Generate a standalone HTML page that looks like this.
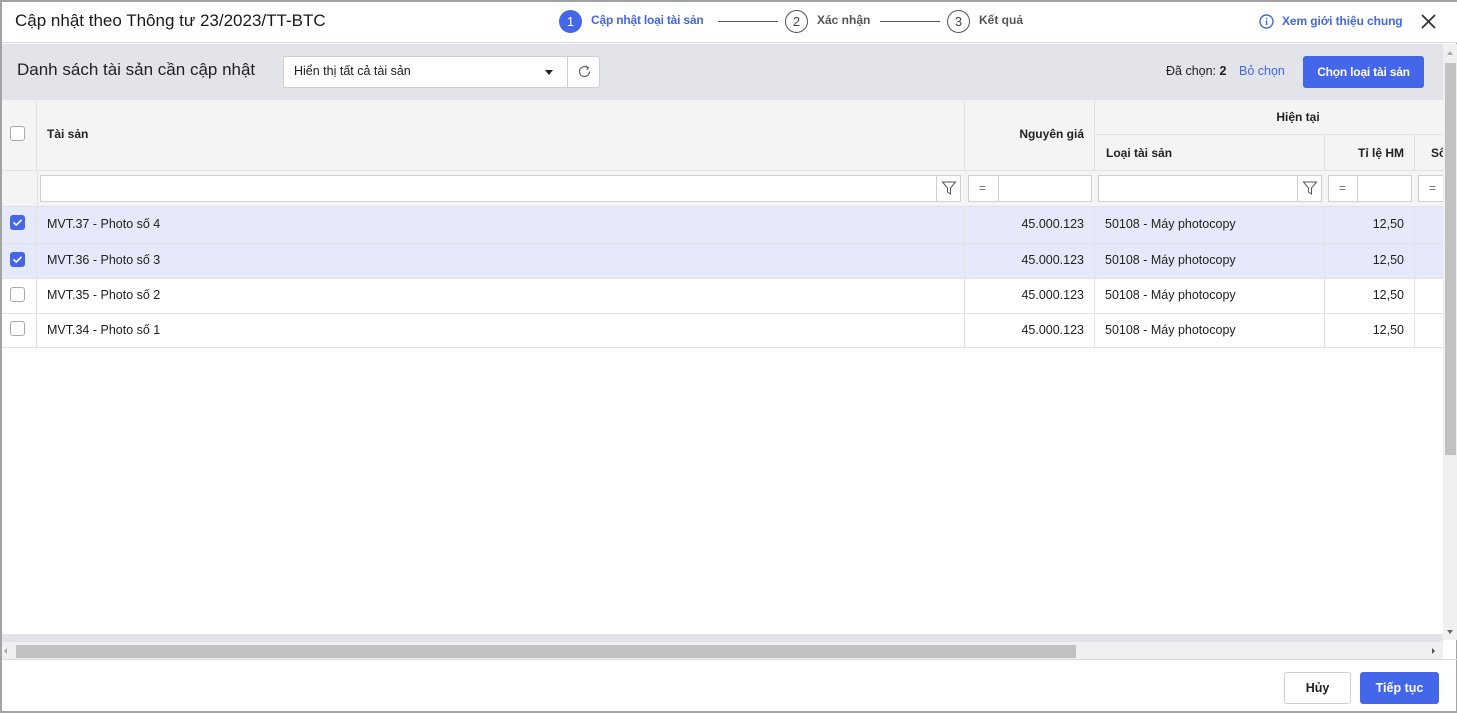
<!DOCTYPE html>
<html><head><meta charset="utf-8"><style>
*{box-sizing:border-box;margin:0;padding:0}
body{width:1457px;height:713px;overflow:hidden;font-family:"Liberation Sans",Arial,sans-serif;font-size:12.5px;color:#212121;background:#fff}
.frame{position:absolute;left:0;top:0;width:1457px;height:713px;border:2px solid #a3a3a3;border-right-width:1px;background:#fff}
.a{position:absolute}
.hdr{left:0;top:0;width:1455px;height:41px;border-bottom:1px solid #dcdcdc;background:#fff}
.tb{left:0;top:42px;width:1441px;height:56px;background:#e3e4e9}
.th{background:#f4f4f4;border-right:1px solid #e2e2e2;border-bottom:1px solid #e2e2e2;font-weight:bold;font-size:12px;color:#222}
.cb{width:15px;height:15px;border:1px solid #a9a9a9;border-radius:3px;background:#fff}
.inp{background:#fff;border:1px solid #cfcfcf;height:27px}
</style></head><body>
<div class="frame">
<div class="a hdr">
 <div class="a" style="left:13px;top:9px;font-size:17px;color:#1a1a1a">Cập nhật theo Thông tư 23/2023/TT-BTC</div>
 <div class="a" style="left:557px;top:8px;width:23px;height:23px;border-radius:50%;background:#4466e8;color:#fff;font-size:13px;text-align:center;line-height:23px">1</div>
 <div class="a" style="left:589px;top:11px;color:#4466e8;font-size:12px;font-weight:bold;letter-spacing:-0.2px">Cập nhật loại tài sản</div>
 <div class="a" style="left:716px;top:19px;width:60px;border-top:1px solid #555"></div>
 <div class="a" style="left:783px;top:8px;width:23px;height:23px;border-radius:50%;border:1px solid #555;color:#444;font-size:13px;text-align:center;line-height:21px">2</div>
 <div class="a" style="left:815px;top:11px;color:#555;font-size:12px;font-weight:bold">Xác nhận</div>
 <div class="a" style="left:878px;top:19px;width:60px;border-top:1px solid #555"></div>
 <div class="a" style="left:945px;top:8px;width:23px;height:23px;border-radius:50%;border:1px solid #555;color:#444;font-size:13px;text-align:center;line-height:21px">3</div>
 <div class="a" style="left:977px;top:11px;color:#555;font-size:12px;font-weight:bold">Kết quả</div>
 <svg class="a" style="left:1257px;top:12px" width="15" height="15" viewBox="0 0 15 15"><circle cx="7.5" cy="7.5" r="6.5" fill="none" stroke="#4466e8" stroke-width="1.4"/><rect x="6.8" y="6.5" width="1.5" height="4.5" fill="#4466e8"/><rect x="6.8" y="3.8" width="1.5" height="1.5" fill="#4466e8"/></svg>
 <div class="a" style="left:1280px;top:12px;color:#4466e8;font-size:12px;font-weight:bold;letter-spacing:-0.1px">Xem giới thiệu chung</div>
 <svg class="a" style="left:1418px;top:11px" width="17" height="17" viewBox="0 0 17 17"><path d="M2 2L15 15M15 2L2 15" stroke="#333" stroke-width="1.8"/></svg>
</div>
<div class="a tb">
 <div class="a" style="left:15px;top:16px;font-size:17px;color:#222">Danh sách tài sản cần cập nhật</div>
 <div class="a" style="left:281px;top:12px;width:317px;height:32px;background:#fff;border:1px solid #cfcfcf;border-radius:3px"></div>
 <div class="a" style="left:292px;top:20px;font-size:12.5px">Hiển thị tất cả tài sản</div>
 <div class="a" style="left:543px;top:26px;width:0;height:0;border-left:4px solid transparent;border-right:4px solid transparent;border-top:5px solid #222"></div>
 <div class="a" style="left:565px;top:13px;height:30px;border-left:1px solid #cfcfcf"></div>
 <svg class="a" style="left:575px;top:20px" width="15" height="15" viewBox="0 0 15 15"><path d="M12.5 7.5A5 5 0 1 1 10.5 3.5" fill="none" stroke="#666" stroke-width="1.2"/><path d="M9 2L11.5 3.6L9.8 5.8" fill="none" stroke="#666" stroke-width="1.2"/></svg>
 <div class="a" style="left:1164px;top:20px;font-size:12.5px">Đã chọn: <b>2</b></div>
 <div class="a" style="left:1237px;top:20px;font-size:12.5px;color:#4466e8">Bỏ chọn</div>
 <div class="a" style="left:1301px;top:12px;width:121px;height:32px;background:#4466e8;border-radius:3px;color:#fff;font-weight:bold;font-size:12px;text-align:center;line-height:32px;letter-spacing:-0.2px">Chọn loại tài sản</div>
</div>
<!-- table header -->
<div class="a th" style="left:0;top:98px;width:35px;height:71px"></div>
<div class="a cb" style="left:8px;top:124px"></div>
<div class="a th" style="left:35px;top:98px;width:928px;height:71px;padding:27px 10px">Tài sản</div>
<div class="a th" style="left:963px;top:98px;width:130px;height:71px;padding:27px 10px;text-align:right">Nguyên giá</div>
<div class="a th" style="left:1093px;top:98px;width:349px;height:35px;text-align:center;line-height:35px;padding-left:58px;overflow:hidden">Hiện tại</div>
<div class="a th" style="left:1093px;top:133px;width:230px;height:36px;line-height:36px;padding-left:11px">Loại tài sản</div>
<div class="a th" style="left:1323px;top:133px;width:90px;height:36px;line-height:36px;text-align:right;padding-right:10px">Tỉ lệ HM</div>
<div class="a th" style="left:1413px;top:133px;width:29px;height:36px;line-height:36px;padding-left:16px;overflow:hidden;white-space:nowrap">Số</div>
<!-- filter row -->
<div class="a th" style="left:0;top:169px;width:1442px;height:36px;font-weight:normal"></div>
<div class="a" style="left:35px;top:169px;height:36px;border-left:1px solid #e2e2e2"></div>
<div class="a inp" style="left:38px;top:173px;width:921px"></div>
<div class="a" style="left:934px;top:174px;height:25px;border-left:1px solid #cfcfcf"></div>
<svg class="a" style="left:939px;top:178px" width="16" height="16" viewBox="0 0 16 16"><path d="M1.5 2H14.5L9.5 8V14L6.5 12V8Z" fill="none" stroke="#555" stroke-width="1"/></svg>
<div class="a inp" style="left:966px;top:173px;width:124px"></div>
<div class="a" style="left:996px;top:174px;height:25px;border-left:1px solid #cfcfcf"></div>
<div class="a" style="left:977px;top:179px;color:#666;font-size:12px">=</div>
<div class="a inp" style="left:1096px;top:173px;width:224px"></div>
<div class="a" style="left:1295px;top:174px;height:25px;border-left:1px solid #cfcfcf"></div>
<svg class="a" style="left:1300px;top:178px" width="16" height="16" viewBox="0 0 16 16"><path d="M1.5 2H14.5L9.5 8V14L6.5 12V8Z" fill="none" stroke="#555" stroke-width="1"/></svg>
<div class="a inp" style="left:1326px;top:173px;width:84px"></div>
<div class="a" style="left:1355px;top:174px;height:25px;border-left:1px solid #cfcfcf"></div>
<div class="a" style="left:1337px;top:179px;color:#666;font-size:12px">=</div>
<div class="a inp" style="left:1416px;top:173px;width:30px"></div>
<div class="a" style="left:1427px;top:179px;color:#666;font-size:12px">=</div>
<!-- rows -->
<div class="a" style="left:0;top:205px;width:1442px;height:36px;background:#e6e9fa"></div>
<div class="a" style="left:0;top:241px;width:1442px;height:35px;background:#e6e9fa"></div>
<div class="a" style="left:0;top:205px;width:1442px;height:140px">
 <div class="a" style="left:0;top:36px;width:1442px;border-top:1px solid #e2e2e2"></div>
 <div class="a" style="left:0;top:71px;width:1442px;border-top:1px solid #e2e2e2"></div>
 <div class="a" style="left:0;top:106px;width:1442px;border-top:1px solid #e2e2e2"></div>
 <div class="a" style="left:0;top:140px;width:1442px;border-top:1px solid #e2e2e2"></div>
 <div class="a" style="left:34px;top:0;height:140px;border-left:1px solid #e2e2e2"></div>
 <div class="a" style="left:962px;top:0;height:140px;border-left:1px solid #e2e2e2"></div>
 <div class="a" style="left:1092px;top:0;height:140px;border-left:1px solid #e2e2e2"></div>
 <div class="a" style="left:1322px;top:0;height:140px;border-left:1px solid #e2e2e2"></div>
 <div class="a" style="left:1412px;top:0;height:140px;border-left:1px solid #e2e2e2"></div>
</div>
<svg class="a" style="left:8px;top:213px" width="15" height="15"><rect width="15" height="15" rx="3" fill="#4466e8"/><path d="M3.5 7.5L6.3 10L11.5 4.8" stroke="#fff" stroke-width="1.6" fill="none"/></svg>
<svg class="a" style="left:8px;top:250px" width="15" height="15"><rect width="15" height="15" rx="3" fill="#4466e8"/><path d="M3.5 7.5L6.3 10L11.5 4.8" stroke="#fff" stroke-width="1.6" fill="none"/></svg>
<div class="a cb" style="left:8px;top:285px"></div>
<div class="a cb" style="left:8px;top:319px"></div>
<div class="a" style="left:45px;top:215px">MVT.37 - Photo số 4</div>
<div class="a" style="left:45px;top:251px">MVT.36 - Photo số 3</div>
<div class="a" style="left:45px;top:286px">MVT.35 - Photo số 2</div>
<div class="a" style="left:45px;top:321px">MVT.34 - Photo số 1</div>
<div class="a" style="left:963px;top:215px;width:119px;text-align:right">45.000.123</div>
<div class="a" style="left:963px;top:251px;width:119px;text-align:right">45.000.123</div>
<div class="a" style="left:963px;top:286px;width:119px;text-align:right">45.000.123</div>
<div class="a" style="left:963px;top:321px;width:119px;text-align:right">45.000.123</div>
<div class="a" style="left:1103px;top:215px">50108 - Máy photocopy</div>
<div class="a" style="left:1103px;top:251px">50108 - Máy photocopy</div>
<div class="a" style="left:1103px;top:286px">50108 - Máy photocopy</div>
<div class="a" style="left:1103px;top:321px">50108 - Máy photocopy</div>
<div class="a" style="left:1323px;top:215px;width:79px;text-align:right">12,50</div>
<div class="a" style="left:1323px;top:251px;width:79px;text-align:right">12,50</div>
<div class="a" style="left:1323px;top:286px;width:79px;text-align:right">12,50</div>
<div class="a" style="left:1323px;top:321px;width:79px;text-align:right">12,50</div>
<!-- scrollbars -->
<div class="a" style="left:1441px;top:42px;width:15px;height:596px;background:#f0f0f0"></div>
<div class="a" style="left:1443px;top:61px;width:11px;height:392px;background:#c1c1c1"></div>
<div class="a" style="left:1445px;top:49px;width:0;height:0;border-left:3px solid transparent;border-right:3px solid transparent;border-bottom:4px solid #aaa"></div>
<div class="a" style="left:1445px;top:628px;width:0;height:0;border-left:3px solid transparent;border-right:3px solid transparent;border-top:4px solid #666"></div>
<div class="a" style="left:0;top:632px;width:1441px;height:8px;background:#e3e4e9"></div>
<div class="a" style="left:0;top:640px;width:1441px;height:17px;background:#f0f0f0"></div>
<div class="a" style="left:14px;top:643px;width:1060px;height:13px;background:#c1c1c1"></div>
<div class="a" style="left:2px;top:646px;width:0;height:0;border-top:3px solid transparent;border-bottom:3px solid transparent;border-right:3px solid #aaa"></div>
<div class="a" style="left:1430px;top:646px;width:0;height:0;border-top:3px solid transparent;border-bottom:3px solid transparent;border-left:3px solid #555"></div>
<div class="a" style="left:0;top:657px;width:1455px;border-top:1px solid #dcdcdc"></div>
<!-- footer -->
<div class="a" style="left:1282px;top:670px;width:67px;height:32px;border:1px solid #cfcfcf;border-radius:3px;background:#fff;text-align:center;line-height:30px;font-weight:bold">Hủy</div>
<div class="a" style="left:1358px;top:670px;width:79px;height:32px;border-radius:3px;background:#4466e8;color:#fff;text-align:center;line-height:32px;font-weight:bold">Tiếp tục</div>
</div>
</body></html>
